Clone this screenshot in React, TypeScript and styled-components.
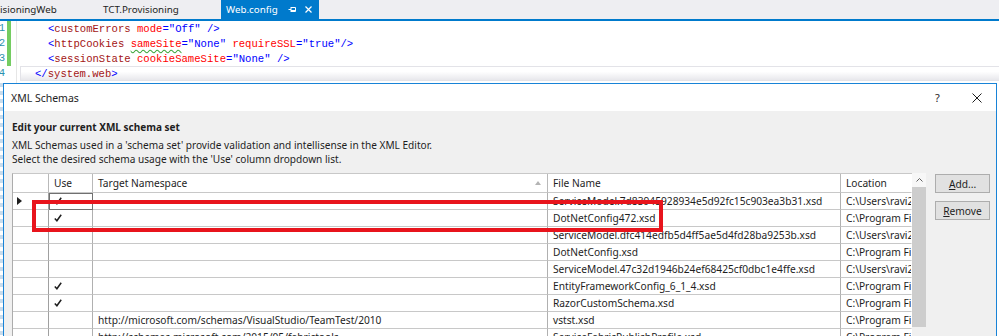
import styled, { createGlobalStyle } from "styled-components";

const UI = `"Noto Sans", "Open Sans", sans-serif`;
const MONO = `"Liberation Mono", "DejaVu Sans Mono", monospace`;

type Row = {
    current?: boolean;
    use?: boolean;
    ns?: string;
    file: string;
    location: string;
};

const USERS = "C:\\Users\\ravi23\\AppData\\Local\\Temp";
const PROGRAM = "C:\\Program Files (x86)\\Microsoft Visual Studio";

const rows: Row[] = [
    {current: true, use: true, file: "ServiceModel.7d83945928934e5d92fc15c903ea3b31.xsd", location: USERS},
    {use: true, file: "DotNetConfig472.xsd", location: PROGRAM},
    {file: "ServiceModel.dfc414edfb5d4ff5ae5d4fd28ba9253b.xsd", location: USERS},
    {file: "DotNetConfig.xsd", location: PROGRAM},
    {file: "ServiceModel.47c32d1946b24ef68425cf0dbc1e4ffe.xsd", location: USERS},
    {use: true, file: "EntityFrameworkConfig_6_1_4.xsd", location: PROGRAM},
    {use: true, file: "RazorCustomSchema.xsd", location: PROGRAM},
    {ns: "http://microsoft.com/schemas/VisualStudio/TeamTest/2010", file: "vstst.xsd", location: PROGRAM},
    {ns: "http://schemas.microsoft.com/2015/05/fabrictools", file: "ServiceFabricPublishProfile.xsd", location: PROGRAM},
];

function App() {
    return <Page>
        <GlobalStyle/>
        <TabBar>
            <Tab $width={97} $pad={0}>isioningWeb</Tab>
            <Tab $width={124} $pad={6}>TCT.Provisioning</Tab>
            <Tab $width={98} $pad={5} $active>
                Web.config
                <TabIcons>
                    <svg width="9" height="7" viewBox="0 0 9 7">
                        <path d="M0.5 3.5 H3 M3 1 V6 M3 1.5 H7.5 V5.5 H3 M3 4.5 H7.5" stroke="#fff" strokeWidth="1" fill="none"/>
                    </svg>
                    <svg width="7" height="7" viewBox="0 0 7 7">
                        <path d="M0.5 0.5 L6.5 6.5 M6.5 0.5 L0.5 6.5" stroke="#fff" strokeWidth="1.2"/>
                    </svg>
                </TabIcons>
            </Tab>
        </TabBar>

        <Editor>
            <Gutter>
                <LineNumbers>
                    <div>81</div>
                    <div>82</div>
                    <div>83</div>
                    <div>84</div>
                </LineNumbers>
                <ChangeBar>
                    <ChangeMark $changed/>
                    <ChangeMark $changed/>
                    <ChangeMark $changed/>
                    <ChangeMark/>
                </ChangeBar>
            </Gutter>
            <Code>
                <CodeLine $indent={27}>
                    <Tok $k="punct">&lt;</Tok><Tok $k="tag">customErrors</Tok> <Tok $k="attr">mode</Tok><Tok
                    $k="punct">="</Tok><Tok $k="value">Off</Tok><Tok $k="punct">" /&gt;</Tok>
                </CodeLine>
                <CodeLine $indent={27}>
                    <Tok $k="punct">&lt;</Tok><Tok $k="tag">httpCookies</Tok> <Tok $k="attr"><Squiggle>sameSite</Squiggle></Tok><Tok
                    $k="punct">="</Tok><Tok $k="value">None</Tok><Tok $k="punct">"</Tok> <Tok $k="attr">requireSSL</Tok><Tok
                    $k="punct">="</Tok><Tok $k="value">true</Tok><Tok $k="punct">"/&gt;</Tok>
                </CodeLine>
                <CodeLine $indent={27}>
                    <Tok $k="punct">&lt;</Tok><Tok $k="tag">sessionState</Tok> <Tok $k="attr">cookieSameSite</Tok><Tok
                    $k="punct">="</Tok><Tok $k="value">None</Tok><Tok $k="punct">" /&gt;</Tok>
                </CodeLine>
                <CodeLine $indent={14} $current>
                    <Tok $k="punct">&lt;/</Tok><Tok $k="tag">system.web</Tok><Tok $k="punct">&gt;</Tok>
                </CodeLine>
            </Code>
        </Editor>

        <Lower>
            <EditorEdge/>
            <Dialog>
                <TitleBar>
                    <Title>XML Schemas</Title>
                    <CaptionButton>?</CaptionButton>
                    <CaptionButton>
                        <svg width="10" height="10" viewBox="0 0 10 10">
                            <path d="M0.5 0.5 L9.5 9.5 M9.5 0.5 L0.5 9.5" stroke="#1e1e1e" strokeWidth="1"/>
                        </svg>
                    </CaptionButton>
                </TitleBar>
                <Body>
                    <Heading>Edit your current XML schema set</Heading>
                    <Description>
                        XML Schemas used in a 'schema set' provide validation and intellisense in the XML Editor.<br/>
                        Select the desired schema usage with the 'Use' column dropdown list.
                    </Description>
                    <Content>
                        <GridWrap>
                            <Grid>
                                <HeadCell/>
                                <HeadCell>Use</HeadCell>
                                <HeadCell>
                                    Target Namespace
                                    <SortArrow width="6" height="4" viewBox="0 0 6 4">
                                        <path d="M0 4 L3 0 L6 4 Z" fill="#b4b4b4"/>
                                    </SortArrow>
                                </HeadCell>
                                <HeadCell>File Name</HeadCell>
                                <HeadCell $last>Location</HeadCell>
                                {rows.map((r, i) => <RowCells key={i} row={r}/>)}
                            </Grid>
                            <ScrollBar>
                                <ScrollButton>
                                    <svg width="7" height="4" viewBox="0 0 7 4">
                                        <path d="M0.5 3.5 L3.5 0.5 L6.5 3.5" stroke="#606060" strokeWidth="1" fill="none"/>
                                    </svg>
                                </ScrollButton>
                                <Thumb/>
                            </ScrollBar>
                            <Highlight/>
                        </GridWrap>
                        <Buttons>
                            <Button><Key>A</Key>dd...</Button>
                            <Button><Key>R</Key>emove</Button>
                        </Buttons>
                    </Content>
                </Body>
            </Dialog>
        </Lower>
    </Page>
}

function RowCells({row}: { row: Row }) {
    return <>
        <RowHeader>
            {row.current && <svg width="5" height="8" viewBox="0 0 5 8">
                <path d="M0 0 L5 4 L0 8 Z" fill="#1e1e1e"/>
            </svg>}
        </RowHeader>
        <Cell $focused={row.current}>
            {row.use && <svg width="8" height="8" viewBox="0 0 8 8">
                <path d="M0.8 4.6 L2.9 6.8 L7.2 0.8" stroke="#1e1e1e" strokeWidth="1.5" fill="none"/>
            </svg>}
        </Cell>
        <Cell>{row.ns}</Cell>
        <Cell>{row.file}</Cell>
        <Cell $last>{row.location}</Cell>
    </>
}

export default App;

const GlobalStyle = createGlobalStyle`
    html, body {
        margin: 0;
        padding: 0;
        background: #fff;
    }

    body {
        width: 999px;
        height: 336px;
        overflow: hidden;
        font-family: ${UI};
        font-size: 10px;
        color: #1e1e1e;
    }
`

const Page = styled.div`
    display: flex;
    flex-direction: column;
    width: 999px;
    height: 336px;
    overflow: hidden;
`

const TabBar = styled.div`
    display: flex;
    height: 19px;
    flex-shrink: 0;
    background: #eeeef2;
    border-bottom: 2px solid #007acc;
    overflow: hidden;
`

const Tab = styled.div<{ $width: number; $pad: number; $active?: boolean }>`
    display: flex;
    align-items: center;
    box-sizing: border-box;
    width: ${p => p.$width}px;
    padding-left: ${p => p.$pad}px;
    background: ${p => (p.$active ? "#007acc" : "transparent")};
    color: ${p => (p.$active ? "#fff" : "#1e1e1e")};
    font-size: 9.8px;
    white-space: nowrap;
`

const TabIcons = styled.div`
    display: flex;
    align-items: center;
    gap: 8px;
    margin-left: auto;
    padding-right: 7px;
`

const Editor = styled.div`
    display: flex;
    height: 62px;
    flex-shrink: 0;
`

const Gutter = styled.div`
    display: flex;
    width: 16px;
    border-right: 1px solid #e6e6e6;
`

const LineNumbers = styled.div`
    width: 5px;
    overflow: hidden;
    direction: rtl;
    font-family: ${MONO};
    font-size: 10.6px;
    line-height: 15px;
    color: #2b91af;
`

const ChangeBar = styled.div`
    margin-left: 2px;
    width: 4px;
`

const ChangeMark = styled.div<{ $changed?: boolean }>`
    height: 15px;
    background: ${p => (p.$changed ? "#74cc62" : "transparent")};
`

const Code = styled.div`
    flex: 1;
    padding-left: 3px;
`

const CodeLine = styled.div<{ $indent: number; $current?: boolean }>`
    box-sizing: border-box;
    height: 15px;
    line-height: 14px;
    padding-left: ${p => p.$indent}px;
    font-family: ${MONO};
    font-size: 10.6px;
    white-space: pre;
    border: 1px solid ${p => (p.$current ? "#e3e3e8" : "transparent")};
    border-right: none;
    background: ${p => (p.$current ? "linear-gradient(to bottom, #fff 35%, #e8e8ec)" : "transparent")};
`

const tokenColors = {
    punct: "#0000ff",
    tag: "#a31515",
    attr: "#ff0000",
    value: "#0000ff",
};

const Tok = styled.span<{ $k: keyof typeof tokenColors }>`
    color: ${p => tokenColors[p.$k]};
`

const Squiggle = styled.span`
    text-decoration: underline wavy #3aa53a;
    text-underline-offset: 2px;
`

const Lower = styled.div`
    display: flex;
    flex: 1;
    min-height: 0;
`

const EditorEdge = styled.div`
    width: 3px;
    background: repeating-linear-gradient(to bottom, #c9dcec 0 4px, #fff 4px 8px);
`

const Dialog = styled.div`
    flex: 1;
    display: flex;
    flex-direction: column;
    margin-right: 2px;
    border: 1px solid #1883d7;
    border-bottom: none;
    background: #f0f0f0;
`

const TitleBar = styled.div`
    display: flex;
    align-items: center;
    height: 27px;
    flex-shrink: 0;
    padding-left: 7px;
    background: #fff;
`

const Title = styled.div`
    flex: 1;
    font-size: 10.5px;
`

const CaptionButton = styled.div`
    display: flex;
    align-items: center;
    justify-content: center;
    width: 39px;
    height: 27px;
    font-size: 11px;
`

const Body = styled.div`
    display: flex;
    flex-direction: column;
    padding: 8px 0 0 8px;
`

const Heading = styled.div`
    font-weight: bold;
    font-size: 10px;
    line-height: 16px;
`

const Description = styled.div`
    margin-top: 3px;
    font-size: 10.1px;
    line-height: 14px;
`

const Content = styled.div`
    display: flex;
    align-items: flex-start;
    gap: 9px;
    margin-top: 7px;
`

const GridWrap = styled.div`
    position: relative;
    display: flex;
    height: 170px;
`

const Grid = styled.div`
    display: grid;
    grid-template-columns: 36px 44px 455px 293px 71px;
    grid-template-rows: 19px;
    grid-auto-rows: 17px;
    border-left: 1px solid #acacac;
    border-top: 1px solid #c8c8c8;
    background: #fff;
    font-size: 10.2px;
`

const HeadCell = styled.div<{ $last?: boolean }>`
    display: flex;
    align-items: center;
    padding-left: 5px;
    border-right: 1px solid ${p => (p.$last ? "transparent" : "#b9b9b9")};
    border-bottom: 1px solid #c8c8c8;
    white-space: nowrap;
    overflow: hidden;
`

const SortArrow = styled.svg`
    margin-left: auto;
    margin-right: 6px;
`

const RowHeader = styled.div`
    display: flex;
    align-items: center;
    padding-left: 4px;
    border-right: 1px solid #a0a0a0;
    border-bottom: 1px solid #c8c8c8;
`

const Cell = styled.div<{ $focused?: boolean; $last?: boolean }>`
    display: flex;
    align-items: center;
    padding-left: 5px;
    border-right: 1px solid ${p => (p.$last ? "transparent" : "#b0b0b0")};
    border-bottom: 1px solid #c8c8c8;
    outline: ${p => (p.$focused ? "1px solid #707070" : "none")};
    outline-offset: -1px;
    white-space: nowrap;
    overflow: hidden;
`

const ScrollBar = styled.div`
    display: flex;
    flex-direction: column;
    width: 14px;
    background: #f0f0f0;
`

const ScrollButton = styled.div`
    display: flex;
    align-items: center;
    justify-content: center;
    height: 14px;
    background: #f7f7f7;
`

const Thumb = styled.div`
    height: 140px;
    background: #cdcdcd;
`

const Highlight = styled.div`
    position: absolute;
    left: 20px;
    top: 27px;
    width: 631px;
    height: 32px;
    box-sizing: border-box;
    border: 4px solid #e8141c;
    pointer-events: none;
`

const Buttons = styled.div`
    display: flex;
    flex-direction: column;
    gap: 8px;
    width: 55px;
    padding-top: 1px;
`

const Button = styled.button`
    height: 19px;
    padding: 0;
    line-height: 16px;
    background: #e1e1e1;
    border: 1px solid #adadad;
    font-family: ${UI};
    font-size: 10.2px;
    color: #1e1e1e;
`

const Key = styled.span`
    text-decoration: underline;
`
